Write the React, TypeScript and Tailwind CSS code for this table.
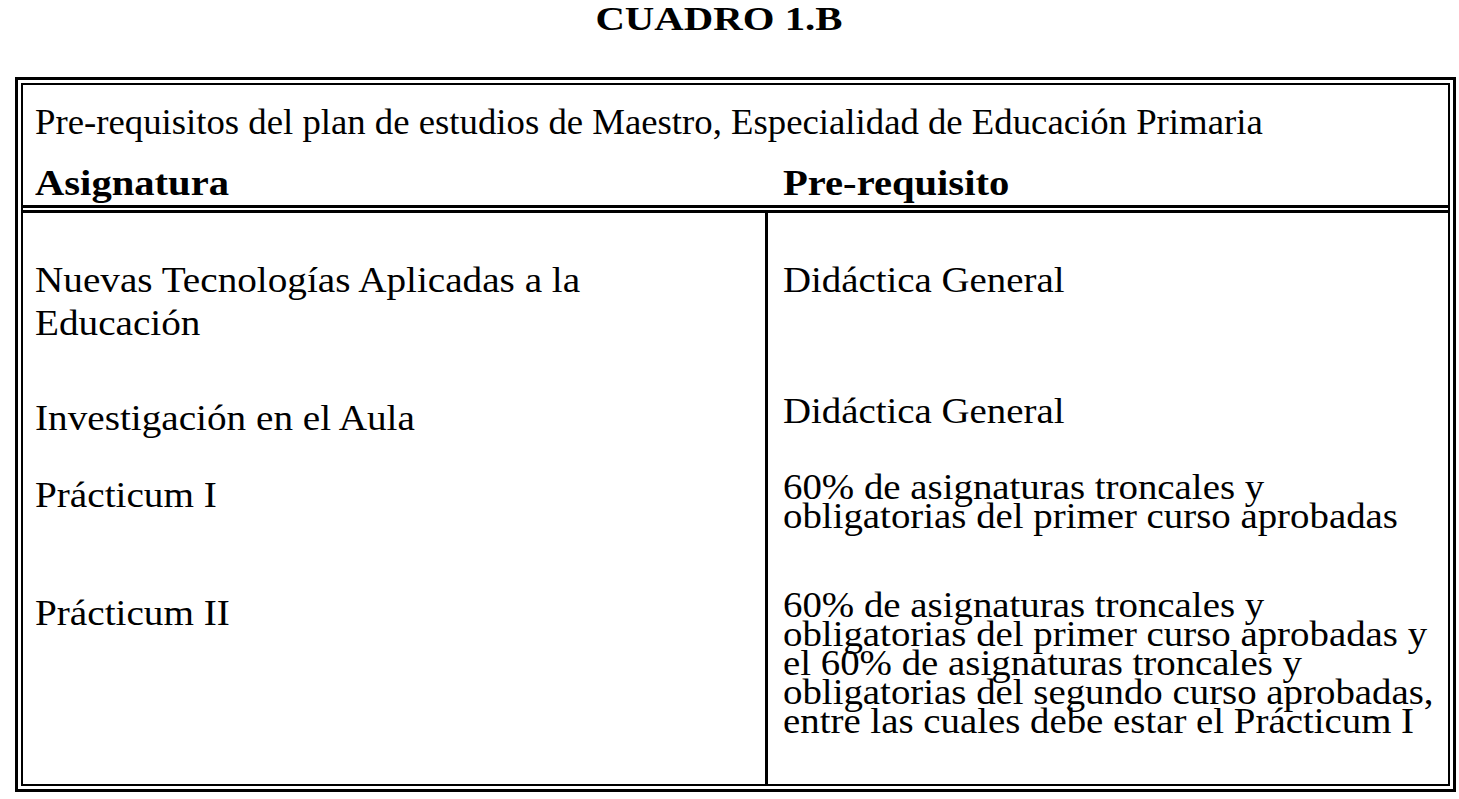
import React from 'react'

const serif = { fontFamily: '"Liberation Serif", "Times New Roman", serif' }

export default function App() {
  return (
    <div className="min-h-screen overflow-hidden bg-white text-black" style={serif}>
      {/* Título */}
      <div className="ml-[15px] flex w-[1441px] justify-center pr-[34px] pt-[4px]">
        <h1 className="scale-x-[1.2] text-[34px] font-bold leading-[30px]">CUADRO 1.B</h1>
      </div>

      {/* Tabla con borde doble */}
      <div className="ml-[15px] mt-[43px] w-[1441px] border-[3px] border-black p-[3px]">
        <div className="border-2 border-black text-[35px]">
          <div className="h-[123px] border-b-[3px] border-black pl-[12px] pt-[16px]">
            <p className="w-fit origin-left scale-x-[1.05] whitespace-nowrap leading-[43px]">
              Pre-requisitos del plan de estudios de Maestro, Especialidad de Educación Primaria
            </p>
            <div className="mt-[19px] grid grid-cols-[748px_1fr] font-bold leading-[42px]">
              <span className="w-fit origin-left scale-x-[1.16] whitespace-nowrap">Asignatura</span>
              <span className="w-fit origin-left scale-x-[1.16] whitespace-nowrap">Pre-requisito</span>
            </div>
          </div>
          <div className="h-[2px]" />
          <div className="border-t-[3px] border-black">
            <Row height="h-[167px]" leftPad="pt-[46px]" rightPad="pt-[53px]"
              left={<>Nuevas Tecnologías Aplicadas a la<br />Educación</>}
              right={<>Didáctica General</>}
            />
            <Row height="h-[85px]" leftPad="pt-[17px]" rightPad="pt-[17px]"
              left={<>Investigación en el Aula</>}
              right={<>Didáctica General</>}
            />
            <Row height="h-[115px]" leftPad="pt-[9px]" rightPad="pt-[8px]"
              left={<>Prácticum I</>}
              right={<>60% de asignaturas troncales y<br />obligatorias del primer curso aprobadas</>}
            />
            <Row height="h-[204px]" leftPad="pt-[12px]" rightPad="pt-[11px]"
              left={<>Prácticum II</>}
              right={
                <>
                  60% de asignaturas troncales y<br />
                  obligatorias del primer curso aprobadas y<br />
                  el 60% de asignaturas troncales y<br />
                  obligatorias del segundo curso aprobadas,<br />
                  entre las cuales debe estar el Prácticum I
                </>
              }
            />
          </div>
        </div>
      </div>
    </div>
  )
}

function Row({ height, leftPad, rightPad, left, right }: {
  height: string
  leftPad: string
  rightPad: string
  left: React.ReactNode
  right: React.ReactNode
}) {
  return (
    <div className={`grid grid-cols-[745px_1fr] ${height}`}>
      <div className={`border-r-[3px] border-black pl-[12px] leading-[43px] ${leftPad}`}>
        <p className="w-fit origin-left scale-x-[1.12] whitespace-nowrap">{left}</p>
      </div>
      <div className={`pl-[15px] leading-[29px] ${rightPad}`}>
        <p className="w-fit origin-left scale-x-[1.11] whitespace-nowrap">{right}</p>
      </div>
    </div>
  )
}
